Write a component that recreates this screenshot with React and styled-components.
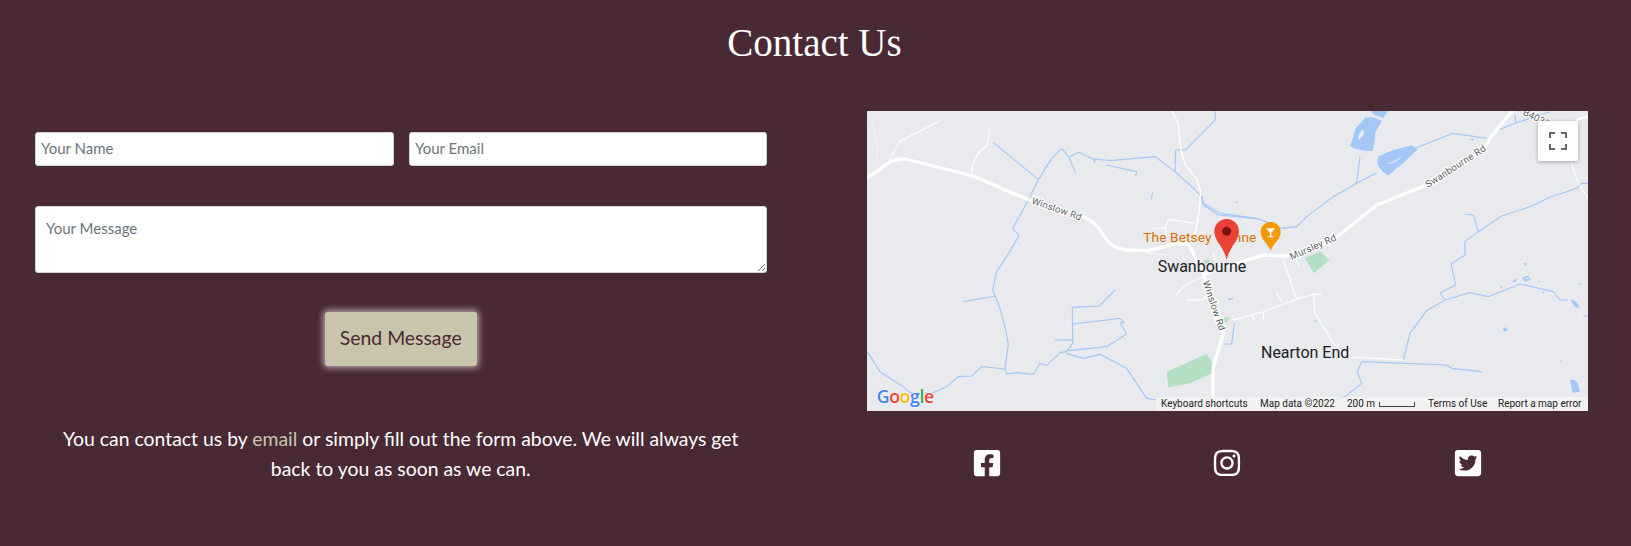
import React from "react";
import styled, { createGlobalStyle } from "styled-components";
import { FaFacebookSquare, FaInstagram, FaTwitterSquare } from "react-icons/fa";

const Global = createGlobalStyle`
  html, body { margin: 0; padding: 0; background: #492934; }
  * { box-sizing: border-box; }
`;

const Page = styled.main`
  background: #492934;
  color: #fff;
  font-family: "Lato", "Open Sans", sans-serif;
  height: 546px;
  overflow: hidden;
`;

const Title = styled.h1`
  margin: 0;
  padding-top: 18px;
  height: 111px;
  text-align: center;
  font-family: "Liberation Serif", serif;
  font-weight: 400;
  font-size: 39px;
  line-height: 50px;
  padding-right: 2px;
`;

const Columns = styled.div`
  display: grid;
  grid-template-columns: 731.5px 721px;
  column-gap: 100.5px;
  padding-left: 35px;
`;

const ContactForm = styled.form`
  display: flex;
  flex-direction: column;
  padding-top: 21px;
`;

const FieldRow = styled.div`
  display: grid;
  grid-template-columns: 358.5px 1fr;
  column-gap: 15.5px;
`;

const TextInput = styled.input`
  height: 34px;
  width: 100%;
  padding: 0 5px 2px;
  border: 1px solid #ced4da;
  border-radius: 3px;
  background: #fff;
  font: 400 15px "Lato", sans-serif;
  &::placeholder { color: #6c757d; opacity: 1; }
`;

const MessageInput = styled.textarea`
  display: block;
  width: 100%;
  height: 67px;
  margin-top: 40px;
  padding: 11px 10px;
  border: 1px solid #ced4da;
  border-radius: 3px;
  background: #fff;
  font: 400 15px/20px "Lato", sans-serif;
  &::placeholder { color: #6c757d; opacity: 1; }
`;

const SendButton = styled.button`
  align-self: center;
  width: 152px;
  height: 54px;
  margin-top: 39px;
  padding: 0 0 3px;
  border: 0;
  border-radius: 3px;
  background: #c9c5ac;
  color: #492934;
  font: 400 19.4px "Lato", sans-serif;
  box-shadow: 0 0 6px 2px #b7a3ae;
`;

const Note = styled.p`
  margin: 58px 0 0;
  padding: 0 26px;
  text-align: center;
  font-size: 19.4px;
  line-height: 30px;
  color: #fff;
`;

const EmailLink = styled.a`
  color: #c9c5ac;
  text-decoration: none;
`;

const MapFrame = styled.div`
  position: relative;
  width: 721px;
  height: 300px;
  background: #e8eaed;
  overflow: hidden;
`;

const MapArt = styled.svg`
  display: block;
  width: 721px;
  height: 300px;
`;

const Water = styled.path`
  fill: none;
  stroke: #a3c8f7;
  stroke-width: 3.4;
  stroke-linejoin: round;
`;
const Lake = styled.path`
  fill: #a3c8f7;
`;
const Park = styled.path`
  fill: #b5dfc2;
`;
const Road = styled.path`
  fill: none;
  stroke: #fff;
  stroke-width: ${(p) => p.$w || 4}px;
  stroke-linejoin: round;
  stroke-linecap: round;
`;
const RoadLabel = styled.text`
  font-family: "Roboto", sans-serif;
  font-size: 29px;
  letter-spacing: 0.6px;
  fill: #5f6368;
  stroke: #fff;
  stroke-width: 7px;
  paint-order: stroke;
  text-anchor: middle;
`;
const PlaceLabel = styled.text`
  font-family: "Roboto", sans-serif;
  font-size: 48px;
  fill: #202124;
  stroke: #e8eaed;
  stroke-width: 5px;
  paint-order: stroke;
`;
const PoiLabel = styled.text`
  font-family: "Roboto", sans-serif;
  font-size: 41px;
  letter-spacing: 0.3px;
  fill: #d96f00;
  stroke: #e8eaed;
  stroke-width: 4px;
  paint-order: stroke;
`;
const Wordmark = styled.text`
  font-family: "Open Sans", sans-serif;
  font-size: 53px;
  font-weight: 600;
  letter-spacing: -1px;
  stroke: #f4f4f4;
  stroke-width: 4px;
  paint-order: stroke;
`;

const FullscreenButton = styled.button`
  position: absolute;
  top: 10px;
  right: 10px;
  width: 40px;
  height: 40px;
  padding: 0;
  display: flex;
  align-items: center;
  justify-content: center;
  border: 0;
  border-radius: 2px;
  background: #fff;
  box-shadow: 0 1px 4px rgba(0, 0, 0, 0.3);
`;

const MapFooter = styled.div`
  position: absolute;
  right: 0;
  bottom: 0;
  height: 14px;
  width: 432px;
  display: flex;
  align-items: center;
  background: rgba(245, 245, 245, 0.72);
  color: #222;
  font: 400 10px/14px "Roboto", sans-serif;
  white-space: nowrap;
`;

const FooterItem = styled.span`
  width: ${(p) => p.$w}px;
  flex: none;
  padding-left: ${(p) => p.$pad}px;
  display: flex;
  align-items: center;
`;

const ScaleBar = styled.i`
  display: block;
  width: 36px;
  height: 5px;
  margin-left: 4px;
  border: 1.5px solid #444;
  border-top: 0;
`;

const SocialRow = styled.nav`
  display: flex;
  justify-content: space-around;
  margin-top: 37px;
  font-size: 30px;
  line-height: 0;
`;

const SocialLink = styled.a`
  color: #fff;
  display: block;
`;

const rivers = [
  "M400 128L535 238",
  "M605 145L575 175L535 240L500 310L458 385L477 407L440 470L410 515L398 570L420 625L436 685L445 735L435 805L440 822L470 818L520 823L540 790L560 797L600 758L620 755L638 730L637 622L718 618L765 570",
  "M605 145L627 172L647 218",
  "M627 172L655 157L700 177L705 188L703 177L750 182L885 170L945 215L990 255L1025 290L1030 315L1075 345L1200 357",
  "M945 215L947 150L978 148L1067 58L1065 33",
  "M738 195L830 215L827 230",
  "M878 278L873 298",
  "M310 605L408 588",
  "M637 672L780 655L793 668L780 668L800 702L740 740L625 752",
  "M585 720L637 720",
  "M22 755L60 815L130 860L150 878L215 880L260 860L295 830L335 828L365 800L435 807",
  "M618 760L670 775L720 763L800 805L860 895L890 900",
  "M1123 668L1115 732L1093 732",
  "M1105 598L1118 595",
  "M1128 306L1133 308",
];

const riversEast = [
  "M5 290L10 310L60 340L170 355L245 385L290 380L320 350L400 290L470 250L530 218",
  "M470 250L480 170",
  "M645 145L760 100L860 115",
  "M895 90L945 70L1050 35",
  "M945 45L947 68",
  "M610 780L630 700L680 632L735 600L720 578L767 555L753 492L795 465L795 425L835 395L905 348L990 320L1050 292L1130 265L1145 250L1164 250",
  "M795 342L820 345L835 395",
  "M735 600L810 578L865 590L960 552L1060 575L1080 600L1105 600",
  "M485 785L740 795L755 805L845 815",
  "M485 785L472 815L485 850L435 890L400 900",
  "M1150 648L1164 648",
  "M85 598L98 595",
];

const lakesEast = [
  "M512 33L563 33L550 54L525 46Z",
  "M495 54Q520 47 545 64L525 99L525 119L518 152Q480 156 450 139L468 84ZM490 86Q474 100 475 119Q496 112 490 86Z",
  "M535 169Q580 148 635 136L652 149L610 189Q588 205 565 227Q540 214 532 189ZM555 192Q585 185 605 169Q590 192 555 192Z",
  "M1112 600Q1125 595 1138 622Q1125 628 1112 600Z",
  "M1110 840Q1132 830 1140 875L1118 878Z",
  "M935 545L950 535L947 547Z",
  "M965 533L985 527L993 540L975 545ZM972 535L985 533L986 539Z",
  "M970 490L980 490L978 498Z",
  "M908 685L918 682L922 692L912 695Z",
  "M900 558L908 558L905 565Z",
  "M1134 548L1143 550L1140 556Z",
  "M1015 541L1021 543L1018 547Z",
  "M1026 574L1034 576L1030 581Z",
  "M1081 778L1085 785L1082 787Z",
  "M810 115L823 118L818 124Z",
  "M342 660L350 662L346 668Z",
];

const parks = [
  "M920 815L1040 762L1057 790L1055 820L990 850L925 862Z",
  "M1030 482L1047 478L1050 490L1035 492Z",
  "M1088 655L1110 650L1100 668L1092 668Z",
];

const parksEast = ["M315 475L360 453L388 480L342 520Z"];

const streets = [
  "M88 180L118 125L240 62",
  "M335 218Q335 170 382 135L390 82",
  "M880 385L918 385L915 425",
  "M915 385L925 358L1000 370",
  "M950 585Q965 555 1030 530",
  "M980 600L1030 600L1040 585",
  "M855 458L920 465",
  "M1060 460L1068 490",
];

const streetsEast = [
  "M100 660L190 635L290 598L340 583L365 583",
  "M245 465L290 598",
  "M340 583L345 640L400 730L445 770L610 780",
  "M230 580L245 605",
  "M190 635L190 660",
  "M155 645L162 660",
  "M1115 190Q1130 250 1164 295",
  "M285 470L297 498",
];

const MapPicture = () => (
  <MapArt viewBox="0 0 721 300" aria-label="Map of Swanbourne">
    <g transform="translate(-7 -11) scale(0.33333)">
      <Road $w={1.5} style={{ opacity: 0.8 }} d="M25 40Q60 110 50 190" />
      {parks.map((d) => <Park key={d} d={d} />)}
      {rivers.map((d) => <Water key={d} d={d} />)}
      {streets.map((d) => <Road key={d} $w={3.2} d={d} />)}
      <Road $w={4.5} d="M935 33L955 70Q960 170 980 200Q1020 240 1022 280Q1020 340 1000 425" />
      <Road $w={10} d="M21 232L60 208Q95 174 135 177L340 228L470 285L510 300L660 347Q705 360 730 405Q755 447 800 450L860 452Q900 445 950 430L985 432" />
      <Road $w={10} d="M985 432L1030 520L1060 640L1090 700L1060 800L1058 933" />
      <Road $w={10} d="M1040 520L1110 497L1210 465" />
      <RoadLabel transform="translate(587 336) rotate(19)">Winslow Rd</RoadLabel>
      <RoadLabel transform="translate(1053 620) rotate(71.5)">Winslow Rd</RoadLabel>
      <PoiLabel x="850" y="425">The Betsey Wynne</PoiLabel>
      <PlaceLabel x="893" y="517">Swanbourne</PlaceLabel>
      <path d="M1100 357C1078 357 1063 374 1063 394C1063 424 1092 440 1100 480C1108 440 1137 424 1137 394C1137 374 1122 357 1100 357Z" fill="#ea4335" />
      <circle cx="1100" cy="394" r="13.5" fill="#7c1212" />
      <Wordmark x="50" y="908">
        <tspan fill="#4285f4">G</tspan>
        <tspan fill="#ea4335">o</tspan>
        <tspan fill="#fbbc05">o</tspan>
        <tspan fill="#4285f4">g</tspan>
        <tspan fill="#34a853">l</tspan>
        <tspan fill="#ea4335">e</tspan>
      </Wordmark>
    </g>
    <g transform="translate(333 -11) scale(0.33333)">
      {parksEast.map((d) => <Park key={d} d={d} />)}
      {lakesEast.map((d) => <Lake key={d} d={d} fillRule="evenodd" />)}
      {riversEast.map((d) => <Water key={d} d={d} />)}
      {streetsEast.map((d) => <Road key={d} $w={3.2} d={d} />)}
      <Road $w={10} d="M190 465L270 468L400 420L530 315L680 255L830 165Q855 150 870 115L935 35" />
      <Road $w={7} d="M1130 60L1170 45" />
      <RoadLabel transform="translate(343 450) rotate(-24)">Mursley Rd</RoadLabel>
      <RoadLabel transform="translate(772 207) rotate(-33)">Swanbourne Rd</RoadLabel>
      <RoadLabel transform="translate(1005 62) rotate(27)">B4033</RoadLabel>
      <path d="M212 366C195 366 182 379 182 396C182 420 205 430 212 453C219 430 242 420 242 396C242 379 229 366 212 366Z" fill="#f29900" />
      <path d="M199 385H225L214 399V409H221V412H203V409H210V399Z" fill="#fff" />
      <PlaceLabel x="183" y="775">Nearton End</PlaceLabel>
    </g>
  </MapArt>
);

export default function App() {
  return (
    <Page>
      <Global />
      <Title>Contact Us</Title>
      <Columns>
        <ContactForm onSubmit={(e) => e.preventDefault()}>
          <FieldRow>
            <TextInput placeholder="Your Name" />
            <TextInput placeholder="Your Email" />
          </FieldRow>
          <MessageInput placeholder="Your Message" />
          <SendButton type="submit">Send Message</SendButton>
          <Note>
            You can contact us by <EmailLink href="#">email</EmailLink> or simply fill out the form above. We will always get back to you as soon as we can.
          </Note>
        </ContactForm>
        <section>
          <MapFrame>
            <MapPicture />
            <FullscreenButton type="button" aria-label="Toggle fullscreen view">
              <svg width="18" height="18" viewBox="0 0 18 18" fill="none" stroke="#666" strokeWidth="2">
                <path d="M1 6V1H6M12 1H17V6M17 12V17H12M6 17H1V12" />
              </svg>
            </FullscreenButton>
            <MapFooter>
              <FooterItem $w={99} $pad={5}>Keyboard shortcuts</FooterItem>
              <FooterItem $w={86} $pad={5}>Map data ©2022</FooterItem>
              <FooterItem $w={87} $pad={6}>200 m<ScaleBar /></FooterItem>
              <FooterItem $w={70}>Terms of Use</FooterItem>
              <FooterItem $w={90}>Report a map error</FooterItem>
            </MapFooter>
          </MapFrame>
          <SocialRow>
            <SocialLink href="#" aria-label="Facebook"><FaFacebookSquare /></SocialLink>
            <SocialLink href="#" aria-label="Instagram"><FaInstagram /></SocialLink>
            <SocialLink href="#" aria-label="Twitter"><FaTwitterSquare /></SocialLink>
          </SocialRow>
        </section>
      </Columns>
    </Page>
  );
}
